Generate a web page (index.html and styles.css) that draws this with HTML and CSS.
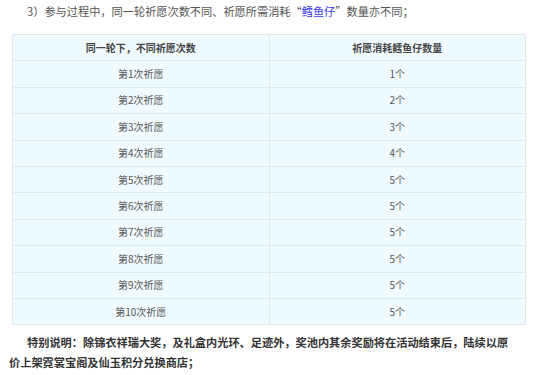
FILE: index.html
```html
<!DOCTYPE html>
<html lang="zh-CN">
<head>
<meta charset="utf-8">
<link rel="stylesheet" href="styles.css">
</head>
<body>
<div class="article">
  <p class="intro">3）参与过程中，同一轮祈愿次数不同、祈愿所需消耗“<span class="hl">鳕鱼仔</span>”数量亦不同；</p>
  <table class="cost">
    <thead>
      <tr><th>同一轮下，不同祈愿次数</th><th>祈愿消耗鳕鱼仔数量</th></tr>
    </thead>
    <tbody>
      <tr><td>第1次祈愿</td><td>1个</td></tr>
      <tr><td>第2次祈愿</td><td>2个</td></tr>
      <tr><td>第3次祈愿</td><td>3个</td></tr>
      <tr><td>第4次祈愿</td><td>4个</td></tr>
      <tr><td>第5次祈愿</td><td>5个</td></tr>
      <tr><td>第6次祈愿</td><td>5个</td></tr>
      <tr><td>第7次祈愿</td><td>5个</td></tr>
      <tr><td>第8次祈愿</td><td>5个</td></tr>
      <tr><td>第9次祈愿</td><td>5个</td></tr>
      <tr><td>第10次祈愿</td><td>5个</td></tr>
    </tbody>
  </table>
  <p class="note">特别说明：除锦衣祥瑞大奖，及礼盒内光环、足迹外，奖池内其余奖励将在活动结束后，陆续以原价上架霓裳宝阁及仙玉积分兑换商店；</p>
</div>
</body>
</html>
```
FILE: styles.css
```css
html, body {
  margin: 0;
  padding: 0;
  background: #ffffff;
}
.article {
  width: 512px;
  padding: 2px 0 0 9px;
  font-family: "Microsoft YaHei", "Noto Sans CJK SC", sans-serif;
  font-size: 11.2px;
  color: #555555;
}
.intro {
  margin: 0;
  line-height: 19px;
  text-indent: 18px;
}
.hl {
  color: #3a3aec;
}
.cost {
  margin: 13px 0 0 3px;
  width: 514px;
  border-collapse: collapse;
  table-layout: fixed;
  background: #effbfe;
  font-size: 10px;
}
.cost th,
.cost td {
  width: 50%;
  height: 25.4px;
  padding: 0;
  border: 1px solid #dde9ec;
  text-align: center;
  vertical-align: middle;
  line-height: 14px;
}
.cost th {
  font-weight: bold;
  color: #444444;
}
.cost td {
  color: #555555;
}
.note {
  width: 505px;
  margin: 7px 0 0;
  line-height: 20px;
  text-indent: 18px;
  font-weight: bold;
  color: #333333;
}
```
